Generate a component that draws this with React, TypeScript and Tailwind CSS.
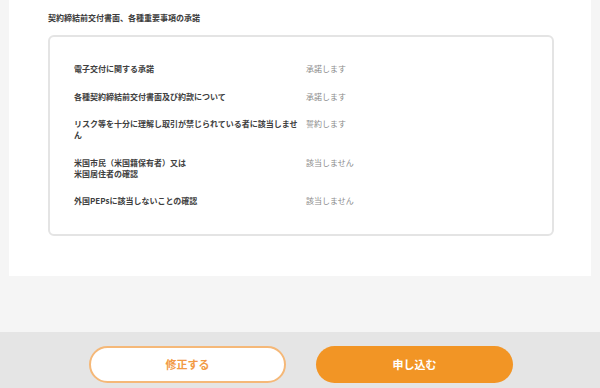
import React from "react";

const rows: { label: React.ReactNode; value: string }[] = [
  { label: "電子交付に関する承諾", value: "承諾します" },
  { label: "各種契約締結前交付書面及び約款について", value: "承諾します" },
  { label: "リスク等を十分に理解し取引が禁じられている者に該当しません", value: "誓約します" },
  {
    label: (
      <>
        米国市民（米国籍保有者）又は
        <br />
        米国居住者の確認
      </>
    ),
    value: "該当しません",
  },
  { label: "外国PEPsに該当しないことの確認", value: "該当しません" },
];

export default function App() {
  return (
    <div
      className="w-[600px] h-[388px] bg-[#f5f5f5] flex flex-col overflow-hidden"
      style={{ fontFamily: '"Noto Sans CJK JP", "Noto Sans", sans-serif' }}
    >
      <div className="mx-[9px] h-[276px] bg-white pt-[12px] pl-[39px]">
        <h2 className="text-[8px] leading-[11px] font-semibold text-[#3a3a3a]">
          契約締結前交付書面、各種重要事項の承諾
        </h2>
        <div className="mt-[12px] w-[506px] h-[201px] border-2 border-[#e4e4e4] rounded-[6px] pt-[26px] pl-[24px] flex flex-col gap-[16.5px]">
          {rows.map((r, i) => (
            <div key={i} className="flex items-start">
              <div className="w-[232px] pr-[6px] text-[8px] leading-[11px] font-semibold text-[#404040]">
                {r.label}
              </div>
              <div className="text-[8px] leading-[11px] text-[#8a8a8a]">
                {r.value}
              </div>
            </div>
          ))}
        </div>
      </div>
      <div className="flex-1" />
      <div className="h-[56px] bg-[#e5e5e5] flex justify-center items-start pt-[14px] gap-[30px] pl-[2px]">
        <button className="w-[197px] h-[37px] rounded-full bg-white border-2 border-[#f5b878] text-[#f29a45] text-[11px] font-bold">
          修正する
        </button>
        <button className="w-[197px] h-[37px] rounded-full bg-[#f29525] text-white text-[11px] font-bold">
          申し込む
        </button>
      </div>
    </div>
  );
}
